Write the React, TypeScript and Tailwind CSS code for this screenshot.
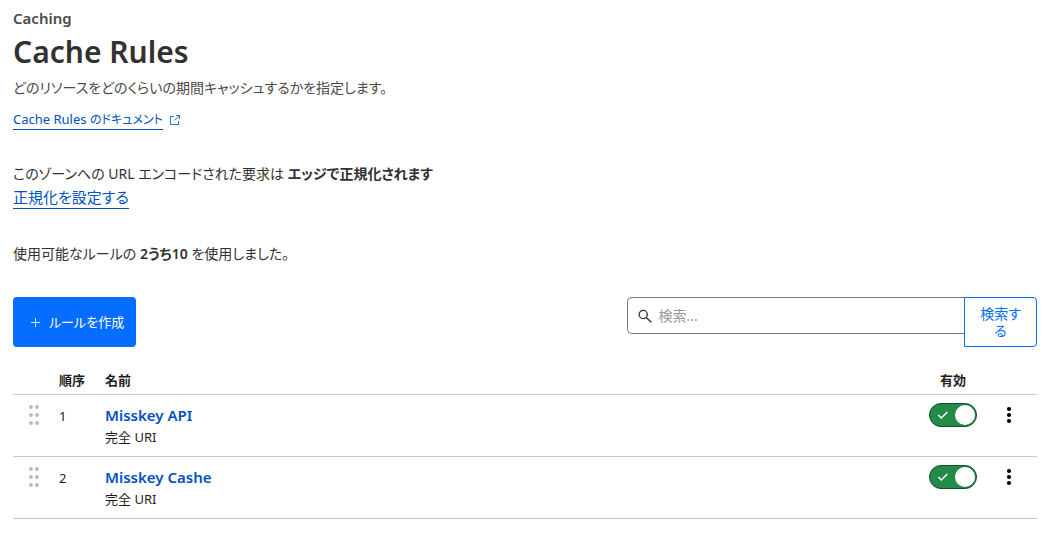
import { useState } from "react";

interface Rule {
  id: number;
  name: string;
  match: string;
  enabled: boolean;
}

const initialRules: Rule[] = [
  { id: 1, name: "Misskey API", match: "完全 URI", enabled: true },
  { id: 2, name: "Misskey Cashe", match: "完全 URI", enabled: true },
];

function ExternalIcon() {
  return (
    <svg width="12" height="12" viewBox="0 0 12 12" fill="none" stroke="currentColor" strokeOpacity="0.8" aria-hidden="true">
      <path d="M5 2.5H1.5v8h8V7" />
      <path d="M7 1.5h3.5V5M10.5 1.5L5.5 6.5" />
    </svg>
  );
}

function SearchIcon() {
  return (
    <svg width="14" height="14" viewBox="0 0 14 14" fill="none" stroke="#313131" aria-hidden="true">
      <circle cx="5.2" cy="5.5" r="4.1" strokeWidth="1.3" />
      <path d="M8.2 8.5l5.1 4.8" strokeWidth="1.5" />
    </svg>
  );
}

function DragIcon() {
  return (
    <svg width="12" height="22" viewBox="0 0 12 22" fill="#b9b9b9" aria-hidden="true">
      {[3, 11, 19].map((y) => (
        <g key={y}>
          <circle cx="3" cy={y} r="1.9" />
          <circle cx="9" cy={y} r="1.9" />
        </g>
      ))}
    </svg>
  );
}

function MoreIcon() {
  return (
    <svg width="6" height="18" viewBox="0 0 6 18" fill="#000" aria-hidden="true">
      <circle cx="3" cy="3" r="2.1" />
      <circle cx="3" cy="9" r="2.1" />
      <circle cx="3" cy="15" r="2.1" />
    </svg>
  );
}

interface ToggleProps {
  label: string;
  checked: boolean;
  onChange: () => void;
}

function Toggle({ label, checked, onChange }: ToggleProps) {
  return (
    <label className="relative block h-6 w-12 cursor-pointer">
      <input
        type="checkbox"
        role="switch"
        aria-label={label}
        checked={checked}
        onChange={onChange}
        className="peer block h-6 w-12 appearance-none rounded-full border border-[#797979] bg-[#b6b6b6] checked:border-[#0f5026] checked:bg-[#228b49]"
      />
      <svg
        width="12"
        height="10"
        viewBox="0 0 12 10"
        fill="none"
        stroke="#fff"
        strokeWidth="1.5"
        className="absolute top-[7px] left-2 hidden peer-checked:block"
        aria-hidden="true"
      >
        <path d="M1.3 5l3 3L10.3 2" />
      </svg>
      <span className="absolute top-0.5 left-0.5 size-5 rounded-full bg-white peer-checked:left-[26px]" />
    </label>
  );
}

export default function App() {
  const [rules, setRules] = useState(initialRules);
  const [query, setQuery] = useState("");

  const toggleRule = (id: number) =>
    setRules(rules.map((r) => (r.id === id ? { ...r, enabled: !r.enabled } : r)));

  return (
    <main
      lang="ja"
      className="bg-white pt-2 pr-[19px] pb-4 pl-[13px] font-['Noto_Sans','Noto_Sans_CJK_JP',sans-serif] text-[14px] leading-6 text-[#313131] [font-feature-settings:'palt']"
    >
      {/* Page heading */}
      <header>
        <p className="text-[15px] leading-[21px] font-semibold text-[#4a4a4a]">Caching</p>
        <h1 className="text-[30px] leading-[45px] font-semibold">Cache Rules</h1>
        <p className="mt-0.5 text-[#4a4a4a]">どのリソースをどのくらいの期間キャッシュするかを指定します。</p>
        <p className="mt-2.5 flex items-center gap-1.5 text-[13px] leading-5 text-[#0051c3]">
          <a href="#docs" className="border-b border-[#0051c3] leading-[18px]">
            Cache Rules <span className="text-[12px]">のドキュメント</span>
          </a>
          <ExternalIcon />
        </p>
      </header>

      {/* Summary */}
      <section className="mt-8">
        <p>
          このゾーンへの URL エンコードされた要求は <strong className="font-semibold">エッジで正規化されます</strong>
        </p>
        <p>
          <a
            href="#normalization"
            className="inline-block border-b border-[#0051c3] text-[15px] leading-[22px] text-[#0051c3]"
          >
            正規化を設定する
          </a>
        </p>
        <p className="mt-8">
          使用可能なルールの <strong className="font-semibold">2うち10</strong> を使用しました。
        </p>
      </section>

      {/* Toolbar */}
      <div className="mt-[31px] flex items-start justify-between">
        <button
          type="button"
          className="flex h-[50px] items-center gap-2 rounded-[4px] bg-[#056dff] pr-3 pl-4 text-[13px] text-white"
        >
          <svg width="12" height="12" viewBox="0 0 12 12" stroke="#fff" strokeOpacity="0.8" aria-hidden="true">
            <path d="M6.5 2v9M2 6.5h9" />
          </svg>
          ルールを作成
        </button>

        <form className="flex w-2/5 items-start" onSubmit={(e) => e.preventDefault()}>
          <label className="flex h-[37px] min-w-0 flex-1 items-center gap-1.5 rounded-l-[5px] border border-r-0 border-[#797979] pl-2.5">
            <SearchIcon />
            <input
              type="text"
              value={query}
              onChange={(e) => setQuery(e.target.value)}
              placeholder="検索..."
              aria-label="検索"
              className="min-w-0 flex-1 text-[14px] outline-none placeholder:text-[#999999]"
            />
          </label>
          <button
            type="submit"
            className="h-[50px] w-[73px] rounded-r-[4px] border border-[#056dff] px-3 text-[14px] leading-[17px] text-[#056dff]"
          >
            検索する
          </button>
        </form>
      </div>

      {/* Rules */}
      <table className="mt-[19px] w-full table-fixed border-collapse text-[13px] text-[#1d1d1d]">
        <thead>
          <tr className="h-7 border-b border-[#c9c9c9] text-left leading-5 [&>th]:p-0 [&>th]:font-semibold">
            <th className="w-[46px]" aria-label="並べ替え" />
            <th className="w-[46px]">順序</th>
            <th>名前</th>
            <th className="w-14 text-center">有効</th>
            <th className="w-14" aria-label="操作" />
          </tr>
        </thead>
        <tbody>
          {rules.map((rule, i) => (
            <tr key={rule.id} className="h-[62px] border-b border-[#c9c9c9] align-top [&>td]:px-0 [&>td]:pt-2">
              <td>
                <button type="button" aria-label="ドラッグ" className="ml-[15px] flex h-6 cursor-grab items-center">
                  <DragIcon />
                </button>
              </td>
              <td className="leading-[26px]">{i + 1}</td>
              <td>
                <a href="#rule" className="block text-[15px] leading-6 font-semibold text-[#0051c3]">
                  {rule.name}
                </a>
                <p className="leading-5">{rule.match}</p>
              </td>
              <td>
                <div className="flex justify-center">
                  <Toggle label={rule.name} checked={rule.enabled} onChange={() => toggleRule(rule.id)} />
                </div>
              </td>
              <td>
                <button type="button" aria-label="メニュー" className="mx-auto flex h-6 w-6 items-center justify-center">
                  <MoreIcon />
                </button>
              </td>
            </tr>
          ))}
        </tbody>
      </table>
    </main>
  );
}
